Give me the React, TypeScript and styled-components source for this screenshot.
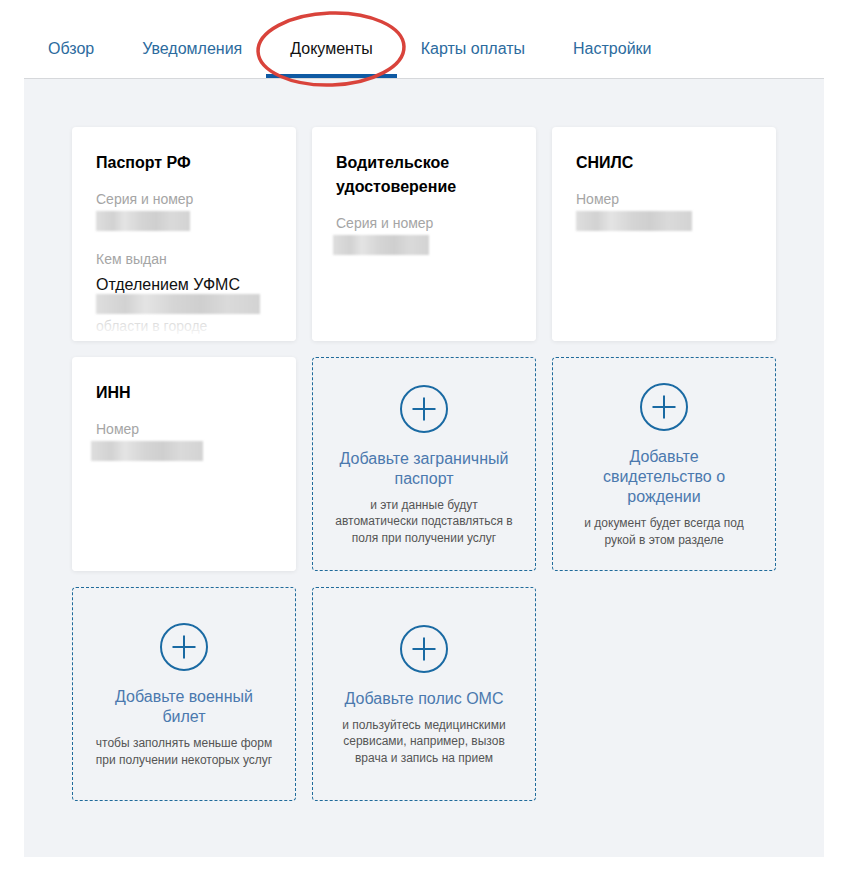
import React from "react";
import styled, { createGlobalStyle } from "styled-components";

const Global = createGlobalStyle`
  html, body { margin: 0; padding: 0; background: #fff; }
  body { font-family: "Liberation Sans", Arial, sans-serif; }
  * { box-sizing: border-box; }
`;

const Page = styled.div`
  position: relative;
  padding: 24px 24px 24px 24px;
  width: 848px;
`;

const TabBar = styled.nav`
  display: flex;
  height: 55px;
  border-bottom: 1px solid #d6d8db;
`;

const Tab = styled.div<{ $active?: boolean }>`
  padding: 16px 24px 0;
  height: 54px;
  font-size: 16px;
  line-height: 18px;
  color: ${(p) => (p.$active ? "#111" : "#2c6b9e")};
  box-shadow: ${(p) => (p.$active ? "inset 0 -4px 0 #0f5aa3" : "none")};
  white-space: nowrap;
`;

const Panel = styled.main`
  background: #f1f3f6;
  padding: 48px 48px 56px;
`;

const Grid = styled.div`
  display: grid;
  grid-template-columns: repeat(3, 224px);
  grid-auto-rows: 214px;
  gap: 16px;
`;

const DocCard = styled.section`
  position: relative;
  background: #fff;
  border-radius: 4px;
  box-shadow: 0 1px 4px rgba(0, 0, 0, 0.07);
  padding: 24px 24px 0;
  overflow: hidden;
  &::after {
    content: "";
    position: absolute;
    left: 0;
    right: 0;
    bottom: 0;
    height: 26px;
    background: linear-gradient(rgba(255, 255, 255, 0.3), #fff 90%);
  }
`;

const DocTitle = styled.h3`
  margin: 0 0 15px;
  font-size: 16px;
  line-height: 24px;
  font-weight: bold;
  color: #000;
`;

const Label = styled.div`
  font-size: 14px;
  line-height: 18px;
  color: #a5a5a5;
  margin-top: 2px;
`;

const Value = styled.div`
  font-size: 16px;
  line-height: 20px;
  color: #111;
  margin-top: 7px;
`;

const Muted = styled.div`
  font-size: 14px;
  line-height: 18px;
  color: #b8b8b8;
  margin-top: 3px;
`;

const Redacted = styled.div<{ $w: number; $shift?: number; $top?: number }>`
  width: ${(p) => p.$w}px;
  height: 20px;
  margin: ${(p) => p.$top ?? 3}px 0 0 ${(p) => p.$shift ?? 0}px;
  background: linear-gradient(
    90deg,
    #dedede 0%,
    #d2d2d2 18%,
    #e4e4e4 30%,
    #d5d5d5 48%,
    #cfcfcf 64%,
    #dadada 80%,
    #d3d3d3 100%
  );
  filter: blur(1px);
`;

const Spacer = styled.div<{ $h: number }>`
  height: ${(p) => p.$h}px;
`;

const AddCard = styled.section`
  border: 1px dashed #1f6a9a;
  border-radius: 4px;
  display: flex;
  flex-direction: column;
  align-items: center;
  justify-content: center;
  padding: 2px 22px 0;
  text-align: center;
`;

const PlusCircle = styled.svg`
  width: 50px;
  height: 50px;
  display: block;
  margin-bottom: 15px;
`;

const AddTitle = styled.div<{ $w?: number }>`
  font-size: 16px;
  line-height: 20px;
  color: #4b79ae;
  max-width: ${(p) => (p.$w ? `${p.$w}px` : "none")};
`;

const AddText = styled.div`
  margin-top: 8px;
  font-size: 12px;
  line-height: 16.5px;
  color: #555;
`;

const Annotation = styled.svg`
  position: absolute;
  left: 254px;
  top: 8px;
  width: 156px;
  height: 84px;
  pointer-events: none;
`;

const Plus = () => (
  <PlusCircle viewBox="0 0 50 50">
    <circle cx="25" cy="25" r="23" fill="none" stroke="#1a6aa3" strokeWidth="2" />
    <path d="M25 13.5v23M13.5 25h23" stroke="#1a6aa3" strokeWidth="2" />
  </PlusCircle>
);

const tabs = ["Обзор", "Уведомления", "Документы", "Карты оплаты", "Настройки"];

const adds = [
  {
    title: "Добавьте заграничный паспорт",
    text: "и эти данные будут автоматически подставляться в поля при получении услуг",
  },
  {
    title: "Добавьте свидетельство о рождении",
    text: "и документ будет всегда под рукой в этом разделе",
    w: 140,
  },
  {
    title: "Добавьте военный билет",
    text: "чтобы заполнять меньше форм при получении некоторых услуг",
    w: 150,
  },
  {
    title: "Добавьте полис ОМС",
    text: "и пользуйтесь медицинскими сервисами, например, вызов врача и запись на прием",
  },
];

export default function App() {
  return (
    <>
      <Global />
      <Page>
        <TabBar>
          {tabs.map((t) => (
            <Tab key={t} $active={t === "Документы"}>
              {t}
            </Tab>
          ))}
        </TabBar>
        <Panel>
          <Grid>
            <DocCard>
              <DocTitle>Паспорт РФ</DocTitle>
              <Label>Серия и номер</Label>
              <Redacted $w={94} />
              <Spacer $h={17} />
              <Label>Кем выдан</Label>
              <Value>Отделением УФМС</Value>
              <Redacted $w={164} $top={-1} />
              <Muted>области в городе</Muted>
            </DocCard>
            <DocCard>
              <DocTitle>
                Водительское
                <br />
                удостоверение
              </DocTitle>
              <Label>Серия и номер</Label>
              <Redacted $w={96} $shift={-3} />
            </DocCard>
            <DocCard>
              <DocTitle>СНИЛС</DocTitle>
              <Label>Номер</Label>
              <Redacted $w={116} />
            </DocCard>
            <DocCard>
              <DocTitle>ИНН</DocTitle>
              <Label>Номер</Label>
              <Redacted $w={112} $shift={-5} />
            </DocCard>
            {adds.map((a) => (
              <AddCard key={a.title}>
                <Plus />
                <AddTitle $w={a.w}>{a.title}</AddTitle>
                <AddText>{a.text}</AddText>
              </AddCard>
            ))}
          </Grid>
        </Panel>
        <Annotation viewBox="0 0 156 84">
          <ellipse
            cx="77"
            cy="41"
            rx="73"
            ry="36"
            fill="none"
            stroke="#d9433b"
            strokeWidth="3.5"
            transform="rotate(-2 77 41)"
          />
        </Annotation>
      </Page>
    </>
  );
}
